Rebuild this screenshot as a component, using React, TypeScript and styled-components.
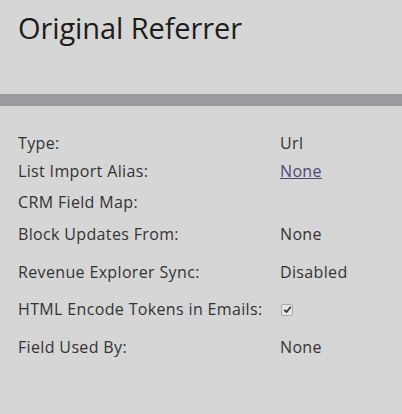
import React from "react";
import styled, { createGlobalStyle } from "styled-components";

const Global = createGlobalStyle`
  html, body { margin: 0; padding: 0; background: #d6d6d6; }
  body { font-family: "Open Sans", "Noto Sans", sans-serif; }
`;

const Page = styled.div`
  width: 402px;
  height: 414px;
  background: #d6d6d6;
  display: flex;
  flex-direction: column;
`;

const Header = styled.header`
  height: 94px;
  box-sizing: border-box;
  padding: 8px 0 0 18px;
`;

const Title = styled.h1`
  margin: 0;
  font-size: 29px;
  font-weight: 400;
  letter-spacing: -0.1px;
  color: #1c1c1c;
  line-height: normal;
`;

const Divider = styled.div`
  height: 12px;
  background: #9b9a9f;
`;

const List = styled.div`
  display: flex;
  flex-direction: column;
  padding: 23px 0 0 18px;
`;

const Row = styled.div<{ $gap: number }>`
  display: grid;
  grid-template-columns: 262px 1fr;
  align-items: center;
  height: 28px;
  margin-top: ${(p) => p.$gap}px;
  font-size: 16px;
  letter-spacing: 0.35px;
  color: #333333;
`;

const Label = styled.span``;

const Value = styled.span``;

const Link = styled.a`
  color: #4a4a78;
  text-decoration: underline;
  cursor: pointer;
`;

const Check = styled.span`
  display: inline-flex;
  align-items: center;
  justify-content: center;
  width: 12px;
  height: 12px;
  margin-left: 1px;
  margin-top: -2px;
  border: 1px solid #a9a9a9;
  border-radius: 2px;
  background: #e6e6e6;
  box-sizing: border-box;
  vertical-align: middle;
  svg { display: block; }
`;

const rows: { label: string; value: React.ReactNode; gap: number }[] = [
  { label: "Type:", value: "Url", gap: 0 },
  { label: "List Import Alias:", value: <Link>None</Link>, gap: 0 },
  { label: "CRM Field Map:", value: "", gap: 3 },
  { label: "Block Updates From:", value: "None", gap: 4 },
  { label: "Revenue Explorer Sync:", value: "Disabled", gap: 10 },
  {
    label: "HTML Encode Tokens in Emails:",
    value: (
      <Check>
        <svg width="9" height="9" viewBox="0 0 9 9">
          <path d="M1.2 4.8 L3.5 7 L7.8 1.8" fill="none" stroke="#333" strokeWidth="1.8" />
        </svg>
      </Check>
    ),
    gap: 9,
  },
  { label: "Field Used By:", value: "None", gap: 10 },
];

export default function App() {
  return (
    <Page>
      <Global />
      <Header>
        <Title>Original Referrer</Title>
      </Header>
      <Divider />
      <List>
        {rows.map((r) => (
          <Row key={r.label} $gap={r.gap}>
            <Label>{r.label}</Label>
            <Value>{r.value}</Value>
          </Row>
        ))}
      </List>
    </Page>
  );
}
